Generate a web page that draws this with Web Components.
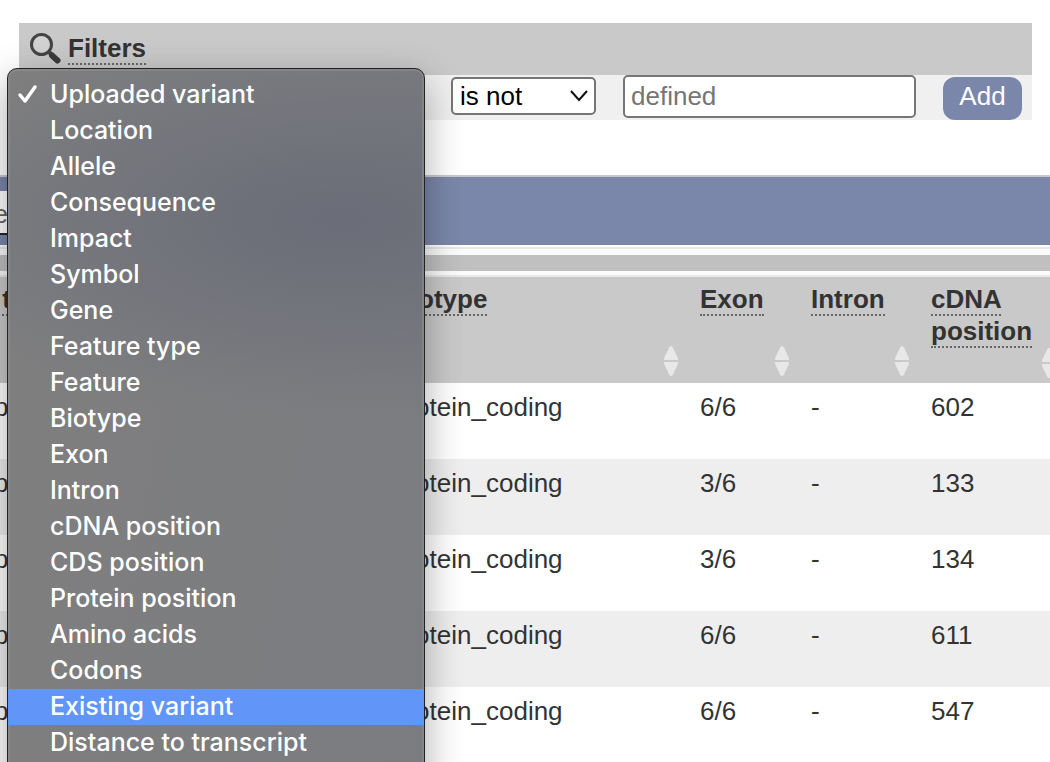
<!DOCTYPE html>
<html lang="en">
<head>
<meta charset="utf-8">
<title>Variant results</title>
<style>
  body { margin: 0; background: #fff; color: #333; font: 26px/32px "Liberation Sans", Arial, sans-serif; overflow: hidden; }
</style>
</head>
<body>
<results-page></results-page>

<script>
const define = (name, html, setup) => {
  const template = document.createElement('template');
  template.innerHTML = html;
  customElements.define(name, class extends HTMLElement {
    constructor() {
      super();
      this.attachShadow({ mode: 'open' }).append(template.content.cloneNode(true));
    }
    connectedCallback() { if (setup) setup(this, this.shadowRoot); }
  });
};

define('search-icon', `
  <style>:host { display: block; width: 32px; height: 32px; } svg { display: block; }</style>
  <svg width="32" height="32" viewBox="0 0 32 32" fill="none" aria-hidden="true">
    <circle cx="12.500" cy="12.500" r="10" fill="#d2d2d2" stroke="#444" stroke-width="3"/>
    <path d="M19 19l4 4" stroke="#444" stroke-width="4"/>
    <path d="M23 23.500l5.500 5" stroke="#3c3c3c" stroke-width="6" stroke-linecap="round"/>
  </svg>`);

define('sort-icon', `
  <style>:host { display: block; width: 16px; height: 32px; } svg { display: block; }</style>
  <svg width="16" height="32" viewBox="0 0 16 32" fill="#e8e8e8" aria-hidden="true">
    <path d="M8 1C9 1 10 2 11 5L14.500 12Q15.500 15 14.500 15H1.500Q0.500 15 1.500 12L5 5C6 2 7 1 8 1Z"/>
    <path d="M8 31C9 31 10 30 11 27L14.500 20Q15.500 17 14.500 17H1.500Q0.500 17 1.500 20L5 27C6 30 7 31 8 31Z"/>
  </svg>`);

define('hint-text', `
  <style>:host { display: inline; border-bottom: 2px dotted #666; }</style><slot></slot>`);

define('field-menu', `
  <style>
    :host { display: block; position: relative; }
    ul { position: absolute; z-index: 2; top: -7px; left: -12px; right: -1px; box-sizing: border-box; margin: 0; padding: 8px 0 24px;
      list-style: none; border: 1px solid #222; border-radius: 10px;
      background: radial-gradient(ellipse 480px 200px at 80% 150px, #6a6d78, #6b6e7800), linear-gradient(100deg, #7f7f7f, #7b7c80);
      box-shadow: inset 0 0 0 2px #8e8e8e99, 0 12px 38px #0005; }
    button { display: grid; grid-template-columns: 34px 1fr; align-items: center; width: 100%; height: 36px; padding: 0 8px 2px;
      border: 0; background: none; color: #fff; text-align: left; font: 500 25px/34px Inter, sans-serif; white-space: nowrap; }
    button.active { background: #6195f7; }
    svg { display: block; }
  </style>
  <ul role="listbox" aria-label="Filter field"></ul>`,
  (host, root) => {
    const names = ['Uploaded variant', 'Location', 'Allele', 'Consequence', 'Impact', 'Symbol', 'Gene', 'Feature type',
      'Feature', 'Biotype', 'Exon', 'Intron', 'cDNA position', 'CDS position', 'Protein position', 'Amino acids',
      'Codons', 'Existing variant', 'Distance to transcript'];
    const check = '<svg width="22" height="20" viewBox="0 0 22 20" fill="none" stroke="#fff" stroke-width="3.500" stroke-linecap="round" stroke-linejoin="round" aria-hidden="true"><path d="M4 11l5 6L19 3"/></svg>';
    root.querySelector('ul').innerHTML = names.map((name, i) =>
      `<li role="none"><button type="button" role="option" aria-selected="${i === 0}" class="${name === 'Existing variant' ? 'active' : ''}"><span>${i === 0 ? check : ''}</span><span>${name}</span></button></li>`).join('');
  });

define('filter-panel', `
  <style>
    :host { display: block; margin: 0 18px 0 19px; }
    header { display: flex; align-items: center; gap: 7px; height: 52px; padding: 0 10px 2px; box-sizing: border-box; background: #c9c9c9; }
    h2 { margin: 0; font-size: 26px; line-height: 32px; }
    form { display: grid; grid-template-columns: 405px 145px 1fr 79px; column-gap: 27px; align-items: start; height: 45px; padding-right: 10px; background: #f0f0f0; }
    .choice { display: grid; margin-top: 2px; }
    select, input { box-sizing: border-box; width: 100%; margin: 0; border: 2px solid #767676; border-radius: 5px; background: #fff; font: inherit; }
    select { grid-area: 1 / 1; height: 38px; padding: 0 7px; appearance: none; color: #000; }
    .choice svg { grid-area: 1 / 1; place-self: center end; margin-right: 7px; pointer-events: none; }
    input { height: 43px; padding: 0 6px; }
    input::placeholder { color: #757575; opacity: 1; }
    button { height: 43px; margin-top: 2px; padding: 0 0 5px; border: 0; border-radius: 12px; background: #7b87aa; color: #fff; font: inherit; }
  </style>
  <header><search-icon></search-icon><h2><hint-text>Filters</hint-text></h2></header>
  <form>
    <field-menu></field-menu>
    <div class="choice">
      <select aria-label="Operator"><option>is not</option></select>
      <svg width="20" height="14" viewBox="0 0 20 14" fill="none" stroke="#111" stroke-width="2" aria-hidden="true"><path d="M2 2l8 9 8-9"/></svg>
    </div>
    <input type="text" placeholder="defined" aria-label="Value">
    <button type="button">Add</button>
  </form>`);

define('table-toolbar', `
  <style>
    :host { display: flex; align-items: center; height: 68px; border-top: 2px solid #c9c9c9; background: #7b87aa; }
    button { width: 120px; height: 44px; margin: 3px 0 0 -108px; padding: 4px 4px 0; border: 0; border-bottom: 2px solid #223;
      background: #fff; color: #666; font: inherit; text-align: right; }
  </style><button type="button">e</button>`);

define('scroll-track', `
  <style>
    :host { display: block; margin-top: 2px; padding: 6px 0 4px; border: solid #e8e8e8; border-width: 2px 0; background: #fbfbfb; }
    div { height: 16px; background: #c0c0c0; }
  </style><div></div>`);

define('results-table', `
  <style>
    :host { display: block; margin-left: -109px; }
    table { width: 1177px; table-layout: fixed; border-collapse: collapse; }
    th, td { box-sizing: border-box; padding: 8px 10px; text-align: left; vertical-align: top; }
    th { padding: 6px 11px 6px 10px; background: #c9c9c9; }
    th > div { display: flex; flex-direction: column; justify-content: space-between; height: 94px; }
    sort-icon { align-self: end; }
    td { height: 76px; }
    tbody tr:nth-child(even) { background: #eee; }
  </style>
  <table>
    <colgroup><col style="width:491px"><col style="width:308px"><col style="width:111px"><col style="width:120px"><col></colgroup>
    <thead><tr></tr></thead><tbody></tbody>
  </table>`,
  (host, root) => {
    root.querySelector('thead tr').innerHTML = ['Feature type', 'Biotype', 'Exon', 'Intron', 'cDNA position']
      .map(name => `<th scope="col"><div><span><hint-text>${name}</hint-text></span><sort-icon></sort-icon></div></th>`).join('');
    root.querySelector('tbody').innerHTML = [['6/6', 602], ['3/6', 133], ['3/6', 134], ['6/6', 611], ['6/6', 547]]
      .map(([exon, position]) => `<tr><td>Transcript</td><td>protein_coding</td><td>${exon}</td><td>-</td><td>${position}</td></tr>`).join('');
  });

define('results-page', `
  <style>
    :host { display: block; padding-top: 23px; overflow: hidden; }
    table-toolbar { margin-top: 55px; }
  </style>
  <filter-panel></filter-panel>
  <table-toolbar></table-toolbar>
  <scroll-track></scroll-track>
  <results-table></results-table>`);
</script>
</body>
</html>
